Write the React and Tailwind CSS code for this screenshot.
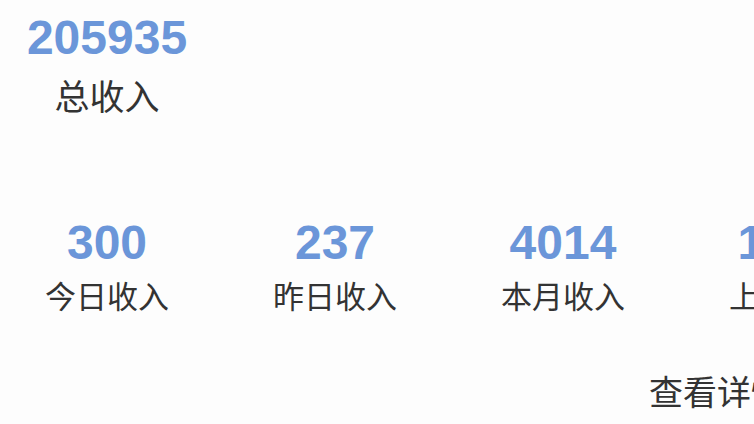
import React from 'react';

const stats = [
  { value: '300', label: '今日收入' },
  { value: '237', label: '昨日收入' },
  { value: '4014', label: '本月收入' },
  { value: '1268', label: '上月收入' },
];

const numFont = { fontFamily: '"Liberation Sans", Arial, sans-serif' };

export default function App() {
  return (
    <div
      className="w-[754px] h-[424px] overflow-hidden bg-[#fdfdfd] relative"
      style={{ fontFamily: '"Noto Sans CJK SC", "Noto Sans", sans-serif' }}
    >
      {/* 总收入 */}
      <div className="w-[214px] pt-[14px] flex flex-col items-center">
        <div className="text-[48px] leading-[48px] font-bold text-[#6b96d9]" style={numFont}>
          205935
        </div>
        <div className="mt-[12px] text-[35px] leading-[42px] text-[#333333]">总收入</div>
      </div>

      {/* 收入统计 */}
      <div className="mt-[103px] flex gap-[14px] w-[1200px]">
        {stats.map((s) => (
          <div key={s.label} className="w-[214px] flex flex-col items-center shrink-0">
            <div className="text-[48px] leading-[48px] font-bold text-[#6b96d9]" style={numFont}>
              {s.value}
            </div>
            <div className="mt-[9px] text-[31px] leading-[38px] text-[#333333] whitespace-nowrap">
              {s.label}
            </div>
          </div>
        ))}
      </div>

      <div className="mt-[57px] ml-[649px] text-[34px] leading-[40px] text-[#333333] whitespace-nowrap">
        查看详情
      </div>
    </div>
  );
}
